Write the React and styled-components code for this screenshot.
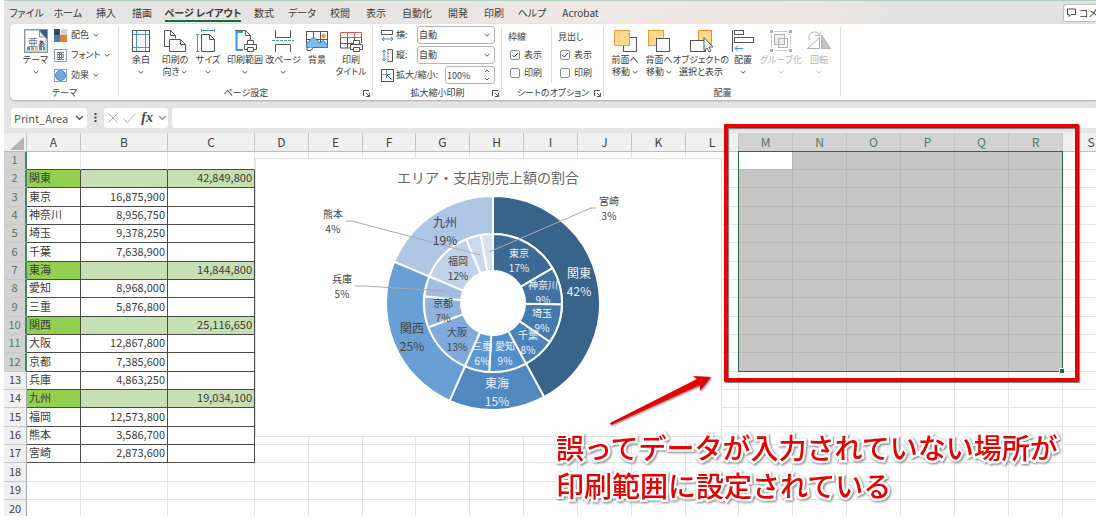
import styled, { createGlobalStyle, css } from 'styled-components'

const sans = '"Noto Sans CJK JP", "Noto Sans", sans-serif'

const GlobalStyle = createGlobalStyle`
* {
    box-sizing: border-box;
}
body {
    margin: 0;
    background: #fff;
    font-family: ${sans};
    color: #3b3b3b;
}
button, input, select {
    font: inherit;
    color: inherit;
    margin: 0;
}
`

const abas = [
    { nome: 'ファイル', largura: 43 },
    { nome: 'ホーム', largura: 40 },
    { nome: '挿入', largura: 36 },
    { nome: '描画', largura: 36 },
    { nome: 'ページ レイアウト', largura: 86, ativa: true },
    { nome: '数式', largura: 36 },
    { nome: 'データ', largura: 40 },
    { nome: '校閲', largura: 36 },
    { nome: '表示', largura: 36 },
    { nome: '自動化', largura: 46 },
    { nome: '開発', largura: 36 },
    { nome: '印刷', largura: 36 },
    { nome: 'ヘルプ', largura: 40 },
    { nome: 'Acrobat', largura: 57 }
]

const colunas = [
    { nome: 'A', largura: 54 },
    { nome: 'B', largura: 87 },
    { nome: 'C', largura: 87 },
    { nome: 'D', largura: 54 },
    { nome: 'E', largura: 54 },
    { nome: 'F', largura: 53 },
    { nome: 'G', largura: 54 },
    { nome: 'H', largura: 54 },
    { nome: 'I', largura: 54 },
    { nome: 'J', largura: 54 },
    { nome: 'K', largura: 54 },
    { nome: 'L', largura: 53 },
    { nome: 'M', largura: 54, sel: true },
    { nome: 'N', largura: 54, sel: true },
    { nome: 'O', largura: 54, sel: true },
    { nome: 'P', largura: 54, sel: true },
    { nome: 'Q', largura: 54, sel: true },
    { nome: 'R', largura: 54, sel: true },
    { nome: 'S' }
]

const linhas = [
    [],
    ['関東', '', '42,849,800'],
    ['東京', '16,875,900', ''],
    ['神奈川', '8,956,750', ''],
    ['埼玉', '9,378,250', ''],
    ['千葉', '7,638,900', ''],
    ['東海', '', '14,844,800'],
    ['愛知', '8,968,000', ''],
    ['三重', '5,876,800', ''],
    ['関西', '', '25,116,650'],
    ['大阪', '12,867,800', ''],
    ['京都', '7,385,600', ''],
    ['兵庫', '4,863,250', ''],
    ['九州', '', '19,034,100'],
    ['福岡', '12,573,800', ''],
    ['熊本', '3,586,700', ''],
    ['宮崎', '2,873,600', ''],
    [],
    [],
    []
]

const areas = [
    { nome: '関東', valor: 42849800, pct: '42%', cor: '#38638b', x: 579, y: 278, claro: true },
    { nome: '東海', valor: 14844800, pct: '15%', cor: '#5088bf', x: 497, y: 388, claro: true },
    { nome: '関西', valor: 25116650, pct: '25%', cor: '#689fd5', x: 412, y: 333 },
    { nome: '九州', valor: 19034100, pct: '19%', cor: '#afc6e4', x: 445, y: 227 }
]

const filiais = [
    { nome: '東京', valor: 16875900, pct: '17%', cor: '#3d6a95', x: 519, y: 257, claro: true },
    { nome: '神奈川', valor: 8956750, pct: '9%', cor: '#4172a1', x: 543, y: 289, claro: true },
    { nome: '埼玉', valor: 9378250, pct: '9%', cor: '#457aad', x: 542, y: 317, claro: true },
    { nome: '千葉', valor: 7638900, pct: '8%', cor: '#4a82b9', x: 528, y: 339, claro: true },
    { nome: '愛知', valor: 8968000, pct: '9%', cor: '#5190cc', x: 505, y: 350, claro: true },
    { nome: '三重', valor: 5876800, pct: '6%', cor: '#5c98d3', x: 482, y: 350, claro: true },
    { nome: '大阪', valor: 12867800, pct: '13%', cor: '#7faadb', x: 457, y: 336 },
    { nome: '京都', valor: 7385600, pct: '7%', cor: '#8fb3dd', x: 443, y: 307 },
    { nome: '兵庫', valor: 4863250, pct: '5%', cor: '#a0bde2', x: 342, y: 283 },
    { nome: '福岡', valor: 12573800, pct: '12%', cor: '#bfd2ea', x: 458, y: 265 },
    { nome: '熊本', valor: 3586700, pct: '4%', cor: '#c9daee', x: 333, y: 218 },
    { nome: '宮崎', valor: 2873600, pct: '3%', cor: '#d7e3f2', x: 609, y: 205 }
]

/* ---------- layout ---------- */

const Janela = styled.div`
margin-left: 4px;
background: #e5e4e4;
border-top: 1px solid #b3cdbf;
overflow: hidden;
`
const BarraAbas = styled.nav`
display: flex;
align-items: center;
height: 23px;
padding-left: 1px;
background: linear-gradient(90deg, #e4e4e4 0%, #e8e5e3 40%, #f0e9e6 55%, #ebe6e3 76%, #e2e2e2 82%, #e2e2e2 100%);
`
const Aba = styled.button`
width: ${p => p.$largura}px;
height: 23px;
padding: 0;
border: 0;
background: none;
font-size: 10px;
line-height: 15px;
white-space: nowrap;
font-feature-settings: 'palt';
font-weight: ${p => (p.$ativa ? 700 : 400)};
flex: none;

span {
    display: inline-block;
    padding: 2px 0 0;
    border-bottom: 2px solid ${p => (p.$ativa ? '#107040' : 'transparent')};
}
`
const BotaoComentario = styled.button`
display: flex;
align-items: center;
gap: 3px;
width: 33px;
height: 18px;
margin-left: auto;
padding: 0 0 0 3px;
border: 1px solid #bdbdbd;
border-right: 0;
border-radius: 3px 0 0 3px;
background: #fff;
font-size: 10px;
line-height: 16px;
white-space: nowrap;
font-feature-settings: 'palt';
overflow: hidden;

svg {
    flex: none;
}
`
const Faixa = styled.div`
display: flex;
height: 76px;
margin-left: 6px;
background: #fff;
border-radius: 5px 0 0 5px;
box-shadow: 0 1px 2px #a8a8a8;
font-size: 9px;
line-height: 12px;
font-feature-settings: 'palt';
`
const Grupo = styled.section`
display: flex;
flex-direction: column;
flex: none;
width: ${p => p.$largura}px;
position: relative;

&::after {
    content: '';
    position: absolute;
    right: 0;
    top: 3px;
    bottom: 4px;
    width: 1px;
    background: #dcdcdc;
}
`
const Conteudo = styled.div`
display: flex;
flex: 1;
padding-left: ${p => p.$recuo || 0}px;
`
const Rodape = styled.footer`
display: flex;
align-items: center;
justify-content: center;
height: 14px;
position: relative;
`
const Abridor = styled.button`
position: absolute;
right: 2px;
top: 3px;
width: 9px;
height: 9px;
padding: 0;
border: 0;
background: none;

svg {
    display: block;
}
`
const BotaoGrande = styled.button`
display: flex;
flex-direction: column;
align-items: center;
flex: none;
width: ${p => p.$largura}px;
padding: 5px 0 0;
border: 0;
background: none;
white-space: nowrap;
color: ${p => (p.disabled ? '#b4b4b4' : '#3b3b3b')};

& > svg {
    margin-bottom: 1px;
}
`
const Linha = styled.span`
display: flex;
align-items: center;
justify-content: center;
gap: 2px;
height: 12px;
`
const Pilha = styled.div`
display: flex;
flex-direction: column;
padding-top: 1px;
`
const BotaoPequeno = styled.button`
display: flex;
align-items: center;
gap: 4px;
height: 20px;
padding: 0;
border: 0;
background: none;
white-space: nowrap;
`
const Campo = styled.label`
display: flex;
align-items: center;
justify-content: space-between;
width: 114px;
height: 20px;
white-space: nowrap;

& > span {
    display: flex;
    align-items: center;
    gap: 2px;
}
`
const Caixa = styled.div`
display: flex;
align-items: center;
position: relative;
width: ${p => p.$largura}px;
height: 18px;
border: 1px solid #b5b5b5;
border-radius: 3px;
background: #fff;

svg {
    position: absolute;
    right: 4px;
    pointer-events: none;
}
select, input {
    appearance: none;
    width: 100%;
    height: 16px;
    padding: 0 0 0 1px;
    border: 0;
    background: none;
    outline: 0;
}
`
const Opcoes = styled.fieldset`
display: flex;
flex-direction: column;
width: 50px;
height: 56px;
margin: 3px 0 0;
padding: 4px 0 0 6px;
border: 0;
border-right: ${p => (p.$divisor ? '1px solid #dcdcdc' : '0')};

legend {
    float: left;
    padding: 0;
    height: 15px;
}
`
const Opcao = styled.label`
display: flex;
align-items: center;
gap: 4px;
height: 18px;
padding-left: 2px;

input {
    appearance: none;
    width: 10px;
    height: 10px;
    border: 1px solid #8a8a8a;
    border-radius: 2px;
    background: #fff;
}
input:checked {
    background: url("data:image/svg+xml,%3Csvg xmlns='http://www.w3.org/2000/svg' viewBox='0 0 8 8'%3E%3Cpath d='M1.5 4.2l1.8 1.8 3.4-3.8' fill='none' stroke='%23333'/%3E%3C/svg%3E");
}
`
const BarraFormula = styled.div`
display: flex;
align-items: center;
gap: 4px;
height: 33px;
padding: 2px 0 0 7px;
color: #555;
`
const CaixaNome = styled.label`
display: flex;
align-items: center;
width: 76px;
height: 20px;
padding: 0 3px;
border-radius: 3px;
background: #fff;

input {
    flex: 1;
    min-width: 0;
    padding: 0;
    border: 0;
    outline: 0;
    font-size: 11px;
    line-height: 16px;
}
`
const Pontos = styled.span`
display: flex;
justify-content: center;
width: 9px;
`
const Ferramentas = styled.div`
display: flex;
align-items: center;
justify-content: space-between;
width: 64px;
height: 20px;
padding: 0 1px 0 4px;
border-radius: 3px;
background: #fff;

button {
    padding: 0;
    border: 0;
    background: none;
    font: italic 700 14px/16px "Liberation Serif", serif;
    color: #444;
}
svg {
    display: block;
}
`
const Formula = styled.input`
flex: 1;
height: 20px;
border: 0;
border-radius: 3px 0 0 3px;
background: #fff;
outline: 0;
`

/* ---------- planilha ---------- */

const Planilha = styled.main`
position: relative;
background: #fff;
`
/* a ultima coluna continua depois da borda da janela */
const Tabela = styled.table`
width: calc(100% + 24px);
table-layout: fixed;
border-collapse: separate;
border-spacing: 0;
font-size: 11px;
line-height: 15px;

tbody tr td, tbody tr th {
    height: 18px;
}
tbody tr:nth-child(3n) td, tbody tr:nth-child(3n) th {
    height: 19px;
}
tbody tr:last-child td, tbody tr:last-child th {
    height: 16px;
    padding-bottom: 0;
    border-bottom: 0;
}
`
const cabecalho = css`
font-weight: 400;
text-align: center;
overflow: hidden;
background: ${p => (p.$sel ? '#d2d2d2' : '#f0f0f0')};
color: ${p => (p.$sel ? '#4d7d62' : '#444')};
`
const CabColuna = styled.th`
${cabecalho}
height: 19px;
padding: 0 0 1px;
font-size: 12px;
border-right: 1px solid #c4c4c4;
border-bottom: 1px solid ${p => (p.$sel ? '#1f7145' : '#bdbdbd')};
`
const Canto = styled(CabColuna)`
padding: 0;

svg {
    display: block;
    margin: 2px 0 0 6px;
}
`
const CabLinha = styled.th`
${cabecalho}
padding: 0 0 2px;
border-right: ${p => (p.$sel ? '2px solid #3f8a61' : '1px solid #a9a9a9')};
border-bottom: 1px solid #c9c9c9;
`
const Celula = styled.td`
padding: 0 2px 2px;
overflow: hidden;
white-space: nowrap;
border-right: 1px solid #e4e4e4;
border-bottom: 1px solid #e4e4e4;
text-align: ${p => (p.$numero ? 'right' : 'left')};
background: ${p => p.$fundo || '#fff'};
${p => p.$dados && css`border-color: #4a4a4a;`}
${p => p.$topo && css`border-bottom-color: #4a4a4a;`}
${p => p.$sel && css`border-color: #b8b8b8;`}
`
const Selecao = styled.div`
position: absolute;
left: 734px;
top: 18px;
width: 325px;
height: 221px;
border: 1px solid #1f7145;

&::after {
    content: '';
    position: absolute;
    right: -2px;
    bottom: -2px;
    width: 4px;
    height: 4px;
    background: #107040;
    outline: 1px solid #fff;
}
`
const Grafico = styled.figure`
position: absolute;
left: 251px;
top: 25px;
width: 467px;
height: 279px;
margin: 0;
border: 1px solid #e0e0e0;
background: #fff;

svg {
    display: block;
}
`
const Moldura = styled.div`
position: absolute;
left: 720px;
top: -9px;
width: 355px;
height: 258px;
border: 4px solid #e60000;
border-radius: 1px;
box-shadow: 1px 1px 1px #777, inset 1px 1px 1px #777;
`
const Seta = styled.svg`
position: absolute;
left: 602px;
top: 238px;
filter: drop-shadow(1px 1px 1px #777);
`
const Aviso = styled.p`
position: absolute;
left: 552px;
top: 295px;
margin: 0;
font-size: 28px;
line-height: 38px;
font-weight: 500;
color: #e60000;
white-space: nowrap;
-webkit-text-stroke: 5px #fff;
paint-order: stroke fill;
filter: drop-shadow(1px 1px 1px #777);
`

/* ---------- icones ---------- */

const Seta8 = ({ cor = '#555', t = 6 }) => (
    <svg width={t} height={t} viewBox="0 0 6 6" fill="none" stroke={cor}>
        <path d="M.7 2l2.3 2.2L5.3 2" />
    </svg>
)

const Svg = ({ t = 24, children, cor = '#555' }) => (
    <svg width={t} height={t} viewBox={`0 0 ${t} ${t}`} fill="none" stroke={cor}>
        {children}
    </svg>
)

const Impressora = () => (
    <g fill="#fff" stroke="#555">
        <path d="M14.500 15.500v-4h6v4" />
        <path d="M11.500 15.500h12v5h-12z" />
        <path d="M14.500 18.500h6v4h-6z" />
    </g>
)

const icones = {
    tema: (
        <Svg>
            <rect x=".5" y=".5" width="23" height="23" fill="#c9d3dd" stroke="#8496a8" />
            <path d="M2 2h13l6 6v13H2z" fill="#fff" stroke="none" />
            <path d="M15 1h8v9z" fill="#3a5878" stroke="none" />
            <path d="M15.500 2v6h5.500z" fill="#e5edf5" stroke="#4a6888" strokeWidth=".7" />
            <text x="4" y="17" fontSize="10" fill="#777" stroke="none">亜</text>
            <text x="14" y="17" fontSize="7" fontWeight="700" fill="#35506e" stroke="none">あ</text>
            <g stroke="none">
                <rect x="3" y="18" width="3" height="3" fill="#4a90d9" />
                <rect x="7" y="18" width="3" height="3" fill="#ee8a2a" />
                <rect x="11" y="18" width="3" height="3" fill="#f5c242" />
                <rect x="15" y="18" width="3" height="3" fill="#4a90d9" />
                <rect x="19" y="18" width="2" height="3" fill="#58a55c" />
            </g>
        </Svg>
    ),
    margens: (
        <Svg>
            <rect x="3.500" y="1.500" width="17" height="21" fill="#fafafa" />
            <path d="M7.500 2v20M16.500 2v20M4 5.500h16M4 18.500h16" stroke="#3d96e0" />
        </Svg>
    ),
    orientacao: (
        <Svg>
            <path d="M6.500 17.500h-5v-16h6l5 5v3" />
            <path d="M7.500 1.500v5h5" />
            <path d="M6.500 10.500h11l5 5v7h-16z" fill="#fafafa" />
            <path d="M17.500 10.500v5h5" />
        </Svg>
    ),
    tamanho: (
        <Svg>
            <path d="M5.500 5.500h8l5 5v12h-13z" fill="#fafafa" />
            <path d="M13.500 5.500v5h5" />
            <path d="M5 1.500h14M5.500 0v3M18.500 0v3M1.500 5v18M0 5.500h3M0 22.500h3" stroke="#3d96e0" />
        </Svg>
    ),
    area: (
        <Svg>
            <path d="M2.500 1.500h10l5 5v13h-15z" fill="#fafafa" stroke="none" />
            <path d="M11 1.500h1.500l5 5V11M12.500 1.500v5h5M2 1.500h9" />
            <path d="M10 3H3.500v18H10" stroke="#3d96e0" strokeWidth="2" />
            <Impressora />
        </Svg>
    ),
    quebra: (
        <Svg>
            <path d="M4.500 1v7.500h15V1M4.500 23v-7.500h15V23" />
            <path d="M1 11.500h22" stroke="#3d96e0" strokeDasharray="3 1" />
        </Svg>
    ),
    fundo: (
        <Svg>
            <rect x="1.500" y="2.500" width="21" height="16" />
            <path d="M8.500 3v15M15.500 3v15M2 10.500h20" />
            <circle cx="18.500" cy="7" r="2" fill="#ee8a2a" stroke="none" />
            <path d="M1.500 18.500v-4l7-6.500 6.500 6 3-2.500 4.500 4v3z" fill="#80bbed" stroke="#2e7fc4" />
            <path d="M2 19v2.500h4l2-3" fill="#fff" />
        </Svg>
    ),
    titulos: (
        <Svg>
            <path d="M1.500 8v11h12M1.500 14.500h20M8.500 8v11M15.500 8v6M22.500 8v6" />
            <path d="M1.500 3.500h21v5h-21zM8.500 3.500v5M15.500 3.500v5" stroke="#e0524b" />
            <Impressora />
        </Svg>
    ),
    frente: (
        <Svg>
            <rect x="10.500" y="8.500" width="13" height="14" fill="#fafafa" />
            <rect x="1.500" y="1.500" width="15" height="15" fill="#fbd98c" stroke="#ee9a3a" />
        </Svg>
    ),
    tras: (
        <Svg>
            <rect x="1.500" y="1.500" width="15" height="15" fill="#fbd98c" stroke="#ee9a3a" />
            <rect x="9.500" y="9.500" width="13" height="13" fill="#fafafa" />
        </Svg>
    ),
    selecionar: (
        <Svg>
            <rect x="9.500" y="1.500" width="13" height="15" fill="#fbd98c" stroke="#ee8a2a" />
            <rect x="1.500" y="11.500" width="15" height="11" fill="#fafafa" />
            <path d="M15 8.500v13l3-2.500 2 4 2-1-2-4h4z" fill="#fff" />
        </Svg>
    ),
    alinhar: (
        <Svg>
            <path d="M1.500 1v22" />
            <rect x="3.500" y="1.500" width="9" height="4" />
            <rect x="3.500" y="8.500" width="19" height="5" />
            <path d="M12 19.500H4M7 16.500l-3 3 3 3" stroke="#3d96e0" />
        </Svg>
    ),
    agrupar: (
        <Svg cor="#b0b0b0">
            <path d="M5 2.500h14M5 21.500h14M2.500 5v14M21.500 5v14" stroke="#cfcfcf" />
            <rect x="5.500" y="5.500" width="10" height="10" fill="#eee" />
            <rect x="9.500" y="9.500" width="9" height="9" />
            <path d="M1 1h3v3H1zM20 1h3v3h-3zM1 20h3v3H1zM20 20h3v3h-3z" fill="#b0b0b0" stroke="none" />
        </Svg>
    ),
    girar: (
        <Svg cor="#b0b0b0">
            <path d="M12.500 8.500V19.500h-12z" fill="#fff" />
            <path d="M14.500 6v13.500h9z" fill="#c4c4c4" />
            <path d="M2.500 11c-2-4 1-8 5-8 2.500 0 4.500 1 5 3.500M13.500 2.500l-1 4.500-4.500-1" />
        </Svg>
    ),
    cores: (
        <Svg t={13}>
            <g stroke="none">
                <path d="M0 0h6v6H0z" fill="#34495e" />
                <path d="M7 0h6v6H7z" fill="#d5d5d5" />
                <path d="M0 6h6v7H0z" fill="#3f7fc6" />
                <path d="M6 6h7v7H6z" fill="#ea7a2c" />
            </g>
        </Svg>
    ),
    fonte: (
        <Svg t={13} cor="#90a0b0">
            <rect x=".5" y=".5" width="12" height="12" fill="#fff" />
            <path d="M3 3.500h7M3 10.500h7M5.500 3.500v7M7.500 3.500v7M3.500 5.500h6v3h-6z" stroke="#555" strokeWidth=".8" />
        </Svg>
    ),
    efeito: (
        <Svg t={13} cor="#90a0b0">
            <rect x=".5" y=".5" width="12" height="12" fill="#fff" />
            <circle cx="6.500" cy="6.500" r="5" fill="#6fa8dc" stroke="#4a86c0" />
        </Svg>
    ),
    largura: (
        <Svg t={13}>
            <path d="M.5 5.500v-4h11v4zM.5 1v5" />
            <path d="M1 10h11M3 8l-2 2 2 2M10 8l2 2-2 2" stroke="#2b88d8" />
        </Svg>
    ),
    altura: (
        <Svg t={13}>
            <path d="M6.500.5h5v12h-5" />
            <path d="M7 .5v12" strokeDasharray="2 1" />
            <path d="M3 1v11M1 3l2-2 2 2M1 10l2 2 2-2" stroke="#2b88d8" />
        </Svg>
    ),
    escala: (
        <Svg t={13}>
            <rect x=".5" y=".5" width="12" height="12" />
            <path d="M1 5.500h4.500V1" stroke="#999" />
            <path d="M11 11L5.500 5.500M5.500 9V5.500H9" stroke="#2b88d8" />
        </Svg>
    )
}

const Grande = ({ icone, linha1, linha2, largura, seta, off }) => (
    <BotaoGrande $largura={largura} disabled={off}>
        {icones[icone]}
        <Linha>{linha1}</Linha>
        <Linha>
            {linha2}
            {seta && <Seta8 cor={off ? '#bbb' : '#555'} />}
        </Linha>
    </BotaoGrande>
)

const Lancador = () => (
    <Abridor aria-label="詳細">
        <svg width="9" height="9" viewBox="0 0 9 9" fill="none" stroke="#555">
            <path d="M1.500 7V1.500H7M4 4l3.500 3.500M7.500 4v3.500H4" />
        </svg>
    </Abridor>
)

/* ---------- grafico ---------- */

const CX = 493
const CY = 303

const ponto = (a, r) => `${CX + r * Math.sin(a)} ${CY - r * Math.cos(a)}`

function fatias(lista, r1, r2) {
    const total = lista.reduce((s, f) => s + f.valor, 0)
    let soma = 0
    return lista.map(f => {
        const a = (soma / total) * Math.PI * 2
        soma += f.valor
        const b = (soma / total) * Math.PI * 2
        const g = b - a > Math.PI ? 1 : 0
        return (
            <path
                key={f.nome}
                fill={f.cor}
                d={`M${ponto(a, r2)}A${r2} ${r2} 0 ${g} 1 ${ponto(b, r2)}L${ponto(b, r1)}A${r1} ${r1} 0 ${g} 0 ${ponto(a, r1)}Z`}
            />
        )
    })
}

const Rotulos = ({ lista, tamanho, salto }) => lista.map(f => (
    <g key={f.nome} fill={f.claro ? '#eef2f8' : '#444'} fontSize={tamanho} textAnchor="middle">
        <text x={f.x} y={f.y}>{f.nome}</text>
        <text x={f.x} y={f.y + salto}>{f.pct}</text>
    </g>
))

const Rosca = () => (
    <Grafico>
        <svg width="465" height="277" viewBox="256 159 465 277">
            <text x="488" y="183" fontSize="14" textAnchor="middle" fill="#666">エリア・支店別売上額の割合</text>
            <g stroke="#fff" strokeWidth="2">
                {fatias(areas, 69, 107)}
                {fatias(filiais, 32, 69)}
            </g>
            <path d="M346 221h6l128 34M355 286h10l80 5M596 208h-5l-102 44" fill="none" stroke="#aaa" />
            <Rotulos lista={areas} tamanho={12} salto={18} />
            <Rotulos lista={filiais} tamanho={10} salto={15} />
        </svg>
    </Grafico>
)

function fundoCelula(l, c, valores) {
    if (c >= 12 && c <= 17 && l < 12) return l === 0 && c === 12 ? '#fff' : '#c6c6c6'
    if (c > 2 || !valores[2]) return '#fff'
    return c === 0 ? '#92d050' : '#c6e0b4'
}

function App() {
    return (
        <>
            <GlobalStyle />
            <Janela>
                <BarraAbas>
                    {abas.map(aba => (
                        <Aba key={aba.nome} $largura={aba.largura} $ativa={aba.ativa}>
                            <span>{aba.nome}</span>
                        </Aba>
                    ))}
                    <BotaoComentario>
                        <svg width="9" height="9" viewBox="0 0 9 9" fill="none" stroke="#444">
                            <path d="M.5 1h8v5.500H4L2 8.500v-2H.5z" />
                        </svg>
                        コメント
                    </BotaoComentario>
                </BarraAbas>

                <Faixa>
                    <Grupo $largura={109}>
                        <Conteudo $recuo={7}>
                            <Grande icone="tema" linha1="テーマ" largura={37} seta />
                            <Pilha>
                                <BotaoPequeno>{icones.cores}配色<Seta8 /></BotaoPequeno>
                                <BotaoPequeno>{icones.fonte}フォント<Seta8 /></BotaoPequeno>
                                <BotaoPequeno>{icones.efeito}効果<Seta8 /></BotaoPequeno>
                            </Pilha>
                        </Conteudo>
                        <Rodape>テーマ</Rodape>
                    </Grupo>
                    <Grupo $largura={254}>
                        <Conteudo $recuo={5}>
                            <Grande icone="margens" linha1="余白" largura={34} seta />
                            <Grande icone="orientacao" linha1="印刷の" linha2="向き" largura={34} seta />
                            <Grande icone="tamanho" linha1="サイズ" largura={32} seta />
                            <Grande icone="area" linha1="印刷範囲" largura={42} seta />
                            <Grande icone="quebra" linha1="改ページ" largura={34} seta />
                            <Grande icone="fundo" linha1="背景" largura={34} />
                            <Grande icone="titulos" linha1="印刷" linha2="タイトル" largura={34} />
                        </Conteudo>
                        <Rodape>ページ設定<Lancador /></Rodape>
                    </Grupo>
                    <Grupo $largura={129}>
                        <Conteudo $recuo={8}>
                            <Pilha>
                                <Campo>
                                    <span>{icones.largura}横:</span>
                                    <Caixa $largura={78}>
                                        <select><option>自動</option></select>
                                        <Seta8 />
                                    </Caixa>
                                </Campo>
                                <Campo>
                                    <span>{icones.altura}縦:</span>
                                    <Caixa $largura={78}>
                                        <select><option>自動</option></select>
                                        <Seta8 />
                                    </Caixa>
                                </Campo>
                                <Campo>
                                    <span>{icones.escala}拡大/縮小:</span>
                                    <Caixa $largura={50}>
                                        <input type="text" defaultValue="100%" />
                                        <svg width="6" height="14" viewBox="0 0 6 14" fill="none" stroke="#555">
                                            <path d="M1 4l2-2 2 2M1 10l2 2 2-2" />
                                        </svg>
                                    </Caixa>
                                </Campo>
                            </Pilha>
                        </Conteudo>
                        <Rodape>拡大縮小印刷<Lancador /></Rodape>
                    </Grupo>
                    <Grupo $largura={102}>
                        <Conteudo>
                            <Opcoes $divisor>
                                <legend>枠線</legend>
                                <Opcao><input type="checkbox" defaultChecked />表示</Opcao>
                                <Opcao><input type="checkbox" />印刷</Opcao>
                            </Opcoes>
                            <Opcoes>
                                <legend>見出し</legend>
                                <Opcao><input type="checkbox" defaultChecked />表示</Opcao>
                                <Opcao><input type="checkbox" />印刷</Opcao>
                            </Opcoes>
                        </Conteudo>
                        <Rodape>シートのオプション<Lancador /></Rodape>
                    </Grupo>
                    <Grupo $largura={237}>
                        <Conteudo $recuo={4}>
                            <Grande icone="frente" linha1="前面へ" linha2="移動" largura={34} seta />
                            <Grande icone="tras" linha1="背面へ" linha2="移動" largura={34} seta />
                            <Grande icone="selecionar" linha1="オブジェクトの" linha2="選択と表示" largura={50} />
                            <Grande icone="alinhar" linha1="配置" largura={34} seta />
                            <Grande icone="agrupar" linha1="グループ化" largura={42} seta off />
                            <Grande icone="girar" linha1="回転" largura={34} seta off />
                        </Conteudo>
                        <Rodape>配置</Rodape>
                    </Grupo>
                </Faixa>

                <BarraFormula>
                    <CaixaNome>
                        <input aria-label="名前ボックス" defaultValue="Print_Area" />
                        <Seta8 t={9} />
                    </CaixaNome>
                    <Pontos>
                        <svg width="3" height="11" viewBox="0 0 3 11" fill="#444">
                            <path d="M.5 1h2v2h-2zM.5 4.500h2v2h-2zM.5 8h2v2h-2z" />
                        </svg>
                    </Pontos>
                    <Ferramentas>
                        <button aria-label="キャンセル">
                            <svg width="10" height="10" viewBox="0 0 10 10" stroke="#aaa"><path d="M.5.5l9 9M9.500.5l-9 9" /></svg>
                        </button>
                        <button aria-label="入力">
                            <svg width="13" height="10" viewBox="0 0 13 10" fill="none" stroke="#aaa"><path d="M.5 5.500l4 4 8-9" /></svg>
                        </button>
                        <button>fx</button>
                        <Seta8 t={9} cor="#999" />
                    </Ferramentas>
                    <Formula aria-label="数式バー" />
                </BarraFormula>

                <Planilha>
                    <Tabela>
                        <colgroup>
                            <col width="23" />
                            {colunas.map(c => <col key={c.nome} width={c.largura} />)}
                        </colgroup>
                        <thead>
                            <tr>
                                <Canto>
                                    <svg width="14" height="13" viewBox="0 0 14 13" fill="#b4b4b4">
                                        <path d="M14 0v13H0z" />
                                    </svg>
                                </Canto>
                                {colunas.map(c => <CabColuna key={c.nome} $sel={c.sel}>{c.nome}</CabColuna>)}
                            </tr>
                        </thead>
                        <tbody>
                            {linhas.map((valores, l) => (
                                <tr key={l}>
                                    <CabLinha $sel={l < 12}>{l + 1}</CabLinha>
                                    {colunas.map((c, i) => (
                                        <Celula
                                            key={c.nome}
                                            $numero={i > 0}
                                            $dados={i < 3 && valores.length > 0}
                                            $topo={i < 3 && l === 0}
                                            $sel={c.sel && l < 12}
                                            $fundo={fundoCelula(l, i, valores)}
                                        >
                                            {valores[i]}
                                        </Celula>
                                    ))}
                                </tr>
                            ))}
                        </tbody>
                    </Tabela>
                    <Rosca />
                    <Selecao />
                    <Moldura />
                    <Seta width="112" height="58" viewBox="606 371 112 58">
                        <path d="M610 423L697 379 693 376 711 377 700 391 700 385 611 425z" fill="#e60000" />
                    </Seta>
                    <Aviso>
                        誤ってデータが入力されていない場所が
                        <br />
                        印刷範囲に設定されている
                    </Aviso>
                </Planilha>
            </Janela>
        </>
    )
}

export default App
